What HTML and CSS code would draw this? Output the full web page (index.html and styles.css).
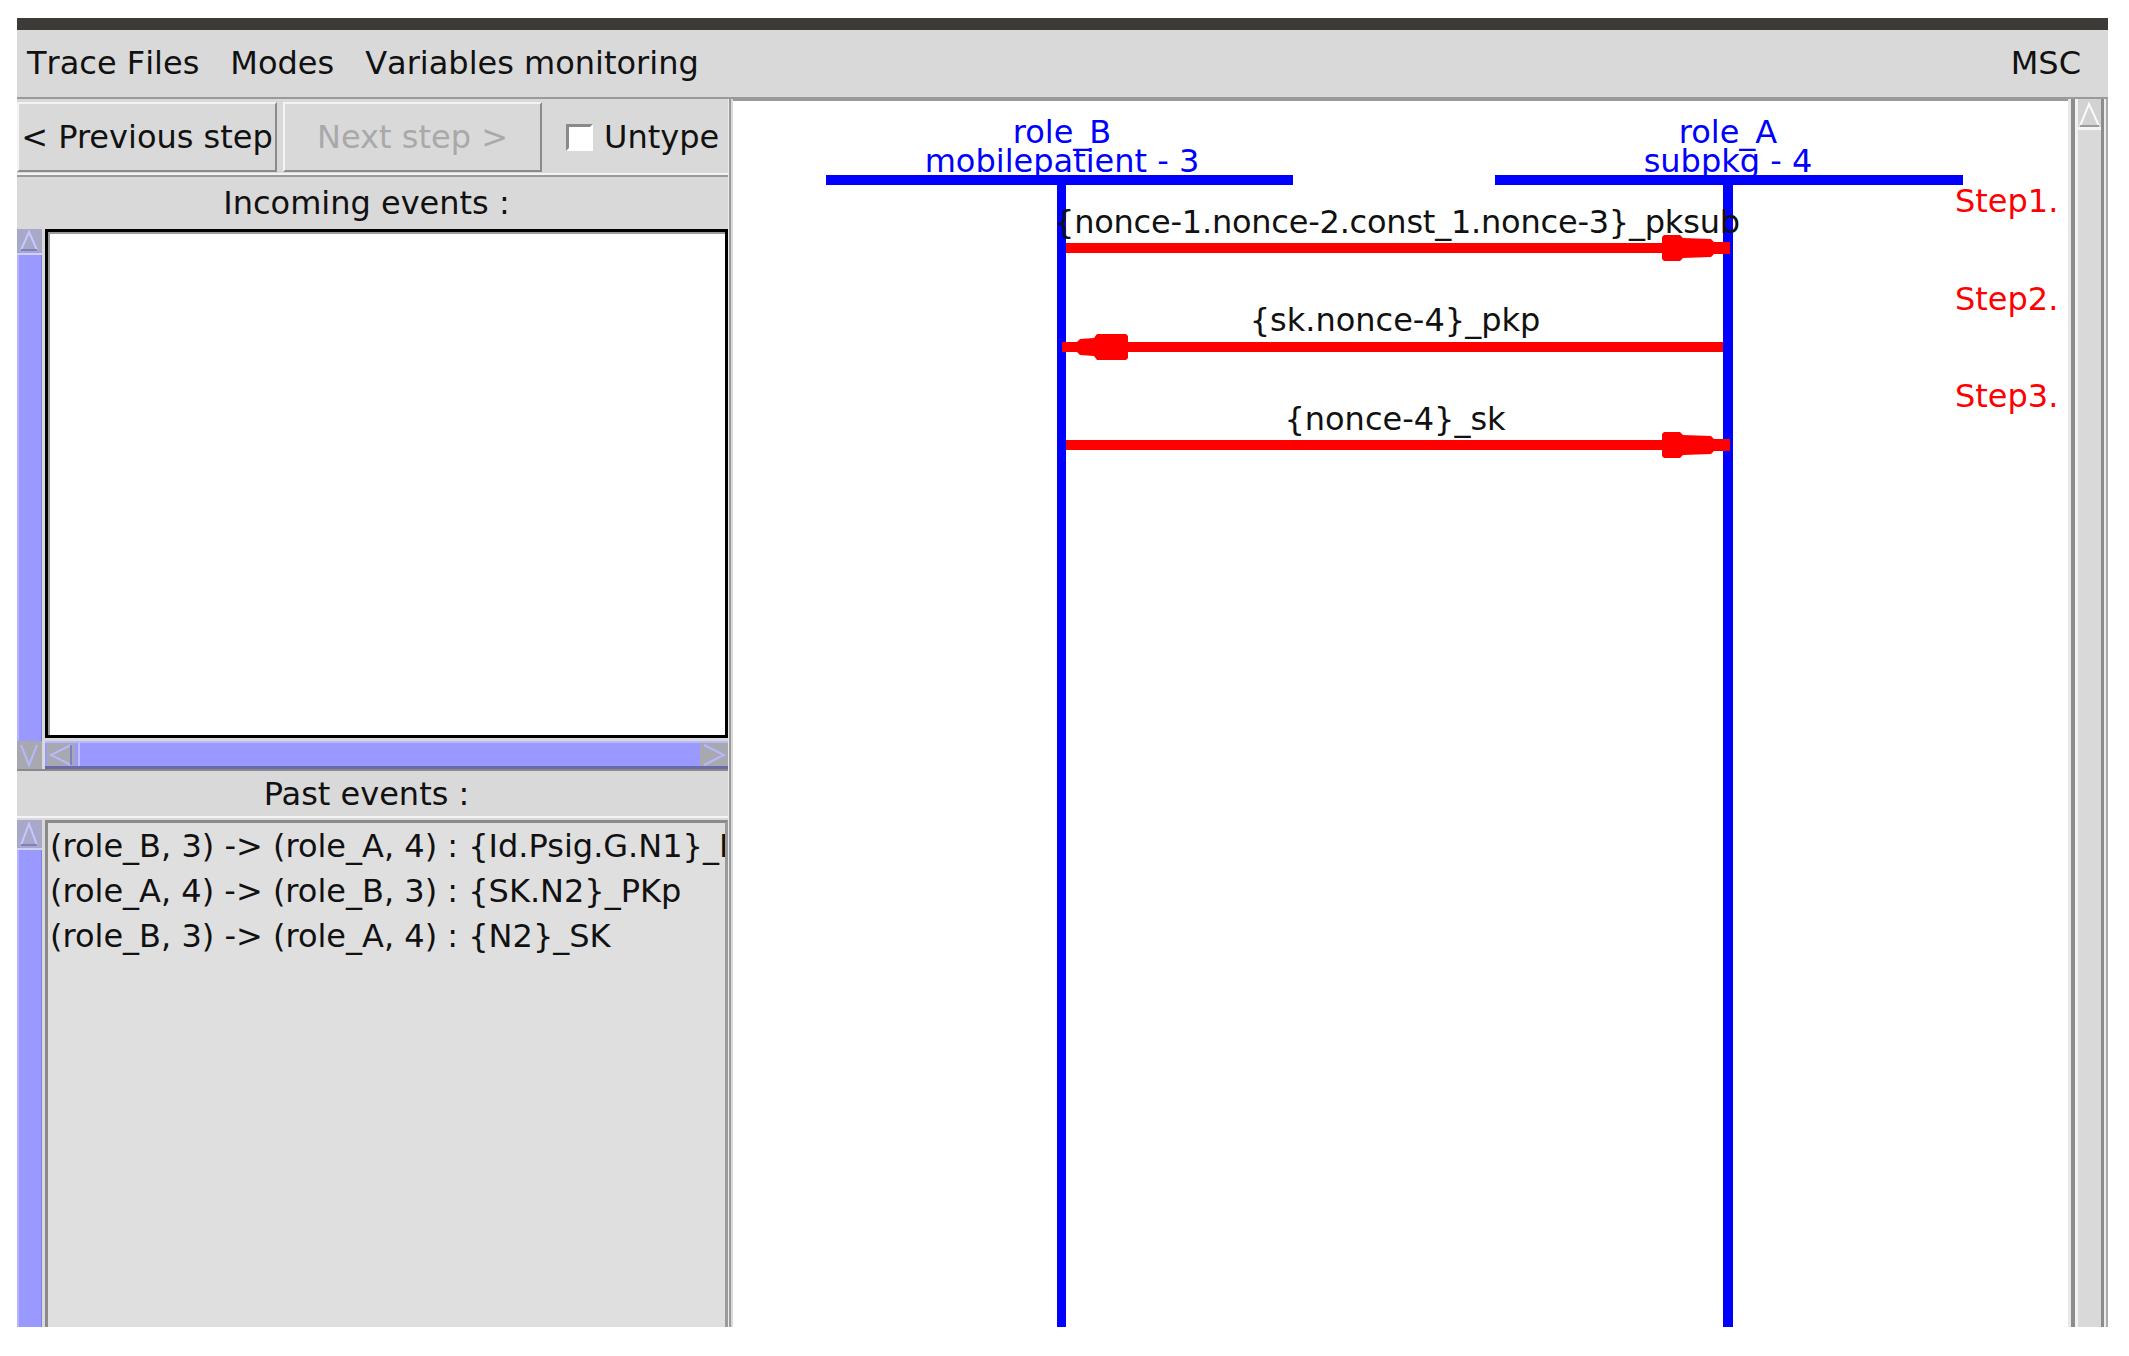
FILE: index.html
```html
<!DOCTYPE html>
<html>
<head>
<meta charset="utf-8">
<title>MSC trace</title>
<link rel="stylesheet" href="styles.css">
</head>
<body>
<div class="app">
  <div class="titlebar"></div>
  <div class="menubar">
    <span class="menu-item">Trace Files</span>
    <span class="menu-item">Modes</span>
    <span class="menu-item">Variables monitoring</span>
    <span class="menu-item menu-right">MSC</span>
  </div>
  <div class="main">
    <div class="left">
      <div class="toolbar">
        <button class="btn btn-prev">&lt; Previous step</button>
        <button class="btn btn-next" disabled>Next step &gt;</button>
        <label class="check"><span class="box"></span>Untype</label>
      </div>
      <div class="sect-head">Incoming events :</div>
      <div class="incoming">
        <div class="vscroll">
          <div class="sb-btn sb-up"><svg width="25" height="24" viewBox="0 0 25 24"><polyline points="4,21 12,3 20,21" fill="none" stroke="#c8c8ff" stroke-width="2"/><line x1="4" y1="21" x2="20" y2="21" stroke="#8080c0" stroke-width="2"/></svg></div>
          <div class="sb-track"></div>
          <div class="sb-btn sb-down"><svg width="25" height="28" viewBox="0 0 25 28"><polyline points="4,4 12,24 20,4" fill="none" stroke="#b8b8ff" stroke-width="2"/></svg></div>
        </div>
        <div class="listbox listbox-white"></div>
        <div class="hscroll">
          <div class="sb-btn sb-left"><svg width="28" height="24" viewBox="0 0 28 24"><polyline points="24,2 4,12 24,22" fill="none" stroke="#b8b8ff" stroke-width="2"/><line x1="24" y1="2" x2="24" y2="22" stroke="#8080c0" stroke-width="2"/></svg></div>
          <div class="hs-thumb"></div>
          <div class="sb-btn sb-right"><svg width="28" height="24" viewBox="0 0 28 24"><polyline points="4,2 24,12 4,22" fill="none" stroke="#b8b8ff" stroke-width="2"/></svg></div>
        </div>
      </div>
      <div class="sect-head sect-past">Past events :</div>
      <div class="past">
        <div class="vscroll vscroll-past">
          <div class="sb-btn sb-up"><svg width="25" height="28" viewBox="0 0 25 28"><polyline points="4,25 12,4 20,25" fill="none" stroke="#c8c8ff" stroke-width="2"/><line x1="4" y1="25" x2="20" y2="25" stroke="#8080c0" stroke-width="2"/></svg></div>
          <div class="sb-track"></div>
        </div>
        <div class="listbox listbox-gray">
          <div class="event">(role_B, 3) -&gt; (role_A, 4) : {Id.Psig.G.N1}_PKsub</div>
          <div class="event">(role_A, 4) -&gt; (role_B, 3) : {SK.N2}_PKp</div>
          <div class="event">(role_B, 3) -&gt; (role_A, 4) : {N2}_SK</div>
        </div>
      </div>
    </div>
    <div class="divider"></div>
    <div class="canvas">
      <svg class="msc" width="1335" height="1226" viewBox="0 0 1335 1226">
        <g class="roles">
          <text x="329" y="42" text-anchor="middle">role_B</text>
          <text x="329" y="71" text-anchor="middle">mobilepatient - 3</text>
          <text x="995" y="42" text-anchor="middle">role_A</text>
          <text x="995" y="71" text-anchor="middle">subpkg - 4</text>
        </g>
        <rect x="93" y="74" width="467" height="10" fill="#0000ff"/>
        <rect x="762" y="74" width="468" height="10" fill="#0000ff"/>
        <rect x="324" y="83" width="9" height="1143" fill="#0000ff"/>
        <rect x="990" y="83" width="10" height="1143" fill="#0000ff"/>

        <g class="labels">
          <text x="664" y="132" text-anchor="middle" textLength="686" lengthAdjust="spacing">{nonce-1.nonce-2.const_1.nonce-3}_pksub</text>
          <text x="662" y="230" text-anchor="middle">{sk.nonce-4}_pkp</text>
          <text x="662" y="329" text-anchor="middle">{nonce-4}_sk</text>
        </g>

        <g fill="#ff0000">
          <rect x="333" y="142" width="660" height="10"/>
          <path d="M929,136 L931,134 L947,134 L950,137 L978,138 L981,141 L997,141 L997,153 L981,153 L978,156 L950,157 L947,160 L931,160 L929,158 Z"/>

          <rect x="333" y="241" width="657" height="10"/>
          <path d="M395,235 L393,233 L364,233 L361,237 L347,238 L344,241 L329,241 L329,251 L344,251 L347,254 L361,255 L364,259 L393,259 L395,257 Z"/>

          <rect x="333" y="339" width="660" height="10"/>
          <path d="M929,333 L931,331 L947,331 L950,334 L978,335 L981,338 L997,338 L997,350 L981,350 L978,353 L950,354 L947,357 L931,357 L929,355 Z"/>
        </g>

        <g class="steps">
          <text x="1222" y="111">Step1.</text>
          <text x="1222" y="209">Step2.</text>
          <text x="1222" y="306">Step3.</text>
        </g>
      </svg>
    </div>
    <div class="mscroll">
      <div class="ms-up"><svg width="23" height="28" viewBox="0 0 23 28"><polyline points="2,25 11,3 21,25" fill="none" stroke="#fafafa" stroke-width="2"/><line x1="2" y1="25" x2="21" y2="25" stroke="#9a9a9a" stroke-width="2"/></svg></div>
      <div class="ms-track"></div>
    </div>
  </div>
</div>
</body>
</html>
```

FILE: styles.css
```css
html, body {
  margin: 0;
  padding: 0;
  background: #ffffff;
}

body {
  font-family: "DejaVu Sans", "Liberation Sans", sans-serif;
  font-size: 32px;
  color: #111111;
}

.app {
  margin: 18px 0 0 17px;
  width: 2091px;
  height: 1309px;
  display: flex;
  flex-direction: column;
}

.titlebar {
  height: 12px;
  background: #3c3b37;
}

.menubar {
  height: 67px;
  line-height: 67px;
  background: #d9d9d9;
  border-bottom: 2px solid #9a9a9a;
  display: flex;
  padding-left: 10px;
  gap: 31px;
  padding-right: 27px;
  white-space: nowrap;
  font-kerning: none;
}

.menu-right {
  margin-left: auto;
}

.main {
  flex: 1;
  display: flex;
  min-height: 0;
}

/* ---------- left panel ---------- */
.left {
  width: 711px;
  background: #d9d9d9;
  display: flex;
  flex-direction: column;
  overflow: hidden;
}

.toolbar {
  height: 78px;
  box-sizing: border-box;
  padding-top: 3px;
  border-bottom: 2px solid #9a9a9a;
  box-shadow: inset 0 -2px 0 #f2f2f2;
  display: flex;
  align-items: flex-start;
  gap: 6px;
}

.btn {
  appearance: none;
  -webkit-appearance: none;
  margin: 0;
  padding: 0;
  font: inherit;
  height: 70px;
  line-height: 66px;
  background: #d9d9d9;
  border: 2px solid;
  border-color: #f4f4f4 #8a8a8a #8a8a8a #f4f4f4;
  color: #111111;
  white-space: nowrap;
  text-align: center;
  overflow: visible;
}

.btn-prev {
  width: 260px;
}

.btn-next {
  width: 259px;
  color: #a9a9a9;
}

.check {
  height: 70px;
  display: flex;
  align-items: center;
  margin-left: 18px;
  gap: 11px;
  white-space: nowrap;
}

.box {
  width: 27px;
  height: 27px;
  box-sizing: border-box;
  background: #ffffff;
  border: 3px solid;
  border-color: #8a8a8a #ffffff #ffffff #8a8a8a;
}

.sect-head {
  height: 51px;
  line-height: 52px;
  text-align: center;
  padding-right: 12px;
  white-space: nowrap;
}

.sect-past {
  height: 49px;
  box-sizing: border-box;
  padding-top: 1px;
  line-height: 44px;
  border-top: 2px solid #8a8a8a;
  border-bottom: 2px solid #f4f4f4;
}

.incoming {
  height: 541px;
  display: grid;
  grid-template-columns: 25px 683px;
  grid-template-rows: 513px 28px;
  column-gap: 3px;
}

.vscroll {
  grid-row: 1 / span 2;
  grid-column: 1;
  margin-top: 1px;
  display: flex;
  flex-direction: column;
  background: #9999ff;
}

.sb-btn {
  flex: none;
  display: flex;
  align-items: center;
  justify-content: center;
  background: #a8a8c8;
}

.sb-up {
  height: 24px;
  border-bottom: 2px solid #d0d0ff;
}

.vscroll-past .sb-up {
  height: 28px;
}

.sb-track {
  flex: 1;
  background: #9999ff;
  border-left: 2px solid #b4b4ff;
  border-right: 1px solid #8080dd;
}

.sb-down {
  height: 28px;
  background: #a8a8b0;
}

.listbox {
  box-sizing: border-box;
  overflow: hidden;
}

.listbox-white {
  grid-row: 1;
  grid-column: 2;
  margin-top: 1px;
  height: 509px;
  background: #ffffff;
  border: 3px solid #000000;
  box-shadow: inset 2px 2px 0 #9a9a9a;
}

.hscroll {
  grid-row: 2;
  grid-column: 2;
  display: flex;
  background: #9999ff;
  border-top: 2px solid #b8b8ff;
  border-bottom: 3px solid #6a6aa8;
}

.sb-left,
.sb-right {
  width: 28px;
  background: #a8a8b0;
}

.sb-left {
  margin-left: 2px;
}

.hs-thumb {
  flex: 1;
  margin: 0 3px;
  background: #9999ff;
  border-left: 2px solid #c0c0ff;
}

.past {
  flex: 1;
  display: grid;
  grid-template-columns: 25px 683px;
  column-gap: 3px;
  min-height: 0;
}

.vscroll-past {
  grid-row: 1;
  margin-top: 2px;
}

.listbox-gray {
  margin-top: 2px;
  background: #dfdfdf;
  border-top: 3px solid #8a8a8a;
  border-left: 3px solid #8a8a8a;
  border-right: 3px solid #9a9a9a;
  padding: 1px 0 0 2px;
  line-height: 45px;
  white-space: nowrap;
  color: #111111;
}

/* ---------- divider & canvas ---------- */
.divider {
  width: 5px;
  background: linear-gradient(to right, #ececec 0 1px, #9a9a9a 1px 3px, #d9d9d9 3px 5px);
}

.canvas {
  flex: 1;
  background: #ffffff;
  border-top: 2px solid #9a9a9a;
  overflow: hidden;
}

.msc {
  display: block;
  font-family: "DejaVu Sans", "Liberation Sans", sans-serif;
  font-size: 32px;
}

.roles text {
  fill: #0000ff;
}

.labels text {
  fill: #111111;
}

.steps text {
  fill: #ff0000;
}

/* ---------- right scrollbar ---------- */
.mscroll {
  width: 40px;
  display: flex;
  flex-direction: column;
  background: linear-gradient(to right,
    #e8e8e8 0 3px,
    #8c8c8c 3px 7px,
    #f2f2f2 7px 10px,
    #d9d9d9 10px 33px,
    #8c8c8c 33px 36px,
    #ececec 36px 38px,
    #aaaaaa 38px 40px);
}

.ms-up {
  margin-left: 10px;
  width: 23px;
  height: 28px;
  background: #d2d2d2;
  border-bottom: 3px solid #f4f4f4;
}

.ms-track {
  flex: 1;
}
```
